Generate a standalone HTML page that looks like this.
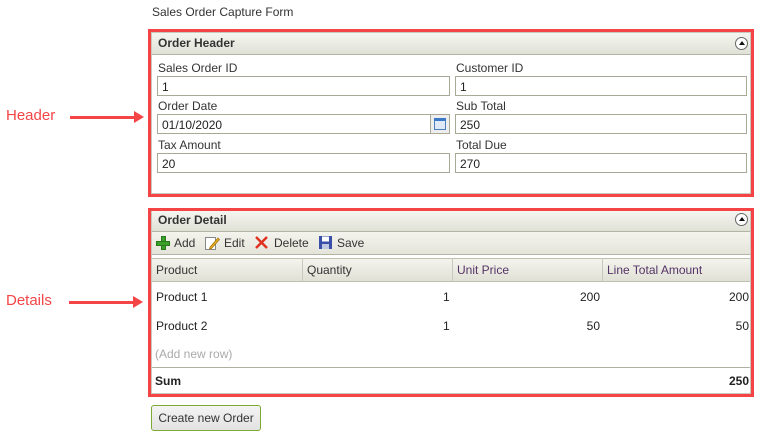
<!DOCTYPE html>
<html><head><style>
*{box-sizing:border-box;margin:0;padding:0}
body{width:758px;height:437px;background:#fff;font-family:"Liberation Sans",sans-serif;font-size:12px;color:#222;position:relative;overflow:hidden}
.a{position:absolute}
.red{position:absolute;border:3px solid #f44446}
.bar{position:absolute;background:linear-gradient(#f6f6f1,#dfe0d6);border-bottom:1px solid #b4b4a4;font-weight:bold;font-size:12px;color:#333;padding-left:6px}
.inp{position:absolute;height:20px;border:1px solid #a9a998;padding:3px 4px;font-size:12px;background:#fff}
.lbl{position:absolute;font-size:12px;color:#333}
.col{position:absolute;top:258px;height:24px;border-right:1px solid #c8c8bc;padding:5px 4px;color:#333}
.tog{position:absolute;width:13px;height:13px;border:1px solid #666;border-radius:50%;background:#fff}
.tog:after{content:"";position:absolute;left:2.5px;top:3px;border-left:3.5px solid transparent;border-right:3.5px solid transparent;border-bottom:4px solid #111}
.arrow{position:absolute;height:3px;background:#f44446}
.arrow:after{content:"";position:absolute;right:-4px;top:-5px;border-top:6.5px solid transparent;border-bottom:6.5px solid transparent;border-left:10px solid #f44446}
</style></head><body>
<div class="a" style="left:152px;top:5px;color:#333">Sales Order Capture Form</div>

<div class="a" style="left:6px;top:107px;color:#f44446;font-size:15px">Header</div>
<div class="arrow" style="left:70px;top:116px;width:70px"></div>
<div class="a" style="left:6px;top:292px;color:#f44446;font-size:15px">Details</div>
<div class="arrow" style="left:69px;top:301px;width:70px"></div>

<div class="red" style="left:148px;top:29px;width:606px;height:168px"></div>
<div class="a" style="left:151px;top:32px;width:600px;height:162px;border:1px solid #c8c8bc"></div>
<div class="bar" style="left:152px;top:33px;width:598px;height:22px;line-height:21px">Order Header</div>
<div class="tog" style="left:735px;top:37px"></div>
<div class="lbl" style="left:158px;top:61px">Sales Order ID</div>
<div class="lbl" style="left:456px;top:61px">Customer ID</div>
<div class="inp" style="left:157px;top:76px;width:293px">1</div>
<div class="inp" style="left:455px;top:76px;width:292px">1</div>
<div class="lbl" style="left:158px;top:99px">Order Date</div>
<div class="lbl" style="left:456px;top:99px">Sub Total</div>
<div class="inp" style="left:157px;top:114px;width:274px">01/10/2020</div>
<div class="a" style="left:430px;top:114px;width:20px;height:20px;border:1px solid #a9a998;background:#eee"><div class="a" style="left:3px;top:3px;width:12px;height:12px;border:1px solid #4a7fc0;border-top:3px solid #3a78c8;background:#dfe9f6"></div></div>
<div class="inp" style="left:455px;top:114px;width:292px">250</div>
<div class="lbl" style="left:158px;top:138px">Tax Amount</div>
<div class="lbl" style="left:456px;top:138px">Total Due</div>
<div class="inp" style="left:157px;top:153px;width:293px">20</div>
<div class="inp" style="left:455px;top:153px;width:292px">270</div>

<div class="red" style="left:148px;top:208px;width:606px;height:189px"></div>
<div class="a" style="left:151px;top:211px;width:600px;height:183px;border:1px solid #c8c8bc"></div>
<div class="bar" style="left:152px;top:211px;width:598px;height:21px;line-height:19px">Order Detail</div>
<div class="tog" style="left:735px;top:213px"></div>
<div class="a" style="left:152px;top:232px;width:598px;height:23px;background:linear-gradient(#f4f4ee,#e4e4da);border-bottom:1px solid #b4b4a4"></div>
<div class="a" style="left:156px;top:236px;width:14px;height:14px">
<div class="a" style="left:5px;top:0;width:5px;height:14px;background:#3aa02a;border:1px solid #2a7a1a"></div>
<div class="a" style="left:0;top:5px;width:14px;height:5px;background:#3aa02a;border:1px solid #2a7a1a"></div></div>
<div class="a" style="left:174px;top:236px;color:#333">Add</div>
<svg class="a" style="left:204px;top:235px" width="16" height="16"><rect x="1.5" y="2.5" width="10" height="12" fill="#fff" stroke="#888"/><path d="M6 12 L14 3 L15.5 4.5 L7.5 13.5 L5.5 14Z" fill="#e8b020" stroke="#a07010" stroke-width=".7"/></svg>
<div class="a" style="left:224px;top:236px;color:#333">Edit</div>
<svg class="a" style="left:254px;top:235px" width="15" height="15"><path d="M2 2 L13 13 M13 2 L2 13" stroke="#e0301e" stroke-width="2.4"/></svg>
<div class="a" style="left:274px;top:236px;color:#333">Delete</div>
<svg class="a" style="left:318px;top:235px" width="15" height="15"><rect x="1" y="1" width="13" height="13" fill="#3a50a8"/><rect x="4" y="1.5" width="7" height="5" fill="#fff"/><rect x="4" y="9" width="7" height="5" fill="#c0c8e0"/></svg>
<div class="a" style="left:337px;top:236px;color:#333">Save</div>

<div class="a" style="left:152px;top:258px;width:598px;height:24px;background:linear-gradient(#f4f4ee,#e0e0d6);border-top:1px solid #c0c0b0;border-bottom:1px solid #c0c0b0"></div>
<div class="col" style="left:152px;width:151px">Product</div>
<div class="col" style="left:303px;width:150px">Quantity</div>
<div class="col" style="left:453px;width:150px;color:#553366">Unit Price</div>
<div class="col" style="left:603px;width:147px;border-right:none;color:#553366">Line Total Amount</div>

<div class="a" style="left:156px;top:290px">Product 1</div>
<div class="a" style="left:443px;top:290px">1</div>
<div class="a" style="left:570px;top:290px;width:30px;text-align:right">200</div>
<div class="a" style="left:718px;top:290px;width:31px;text-align:right">200</div>
<div class="a" style="left:156px;top:319px">Product 2</div>
<div class="a" style="left:443px;top:319px">1</div>
<div class="a" style="left:570px;top:319px;width:30px;text-align:right">50</div>
<div class="a" style="left:718px;top:319px;width:31px;text-align:right">50</div>
<div class="a" style="left:155px;top:347px;color:#aaa">(Add new row)</div>
<div class="a" style="left:152px;top:367px;width:598px;height:1px;background:#b0b0a0"></div>
<div class="a" style="left:155px;top:374px;font-weight:bold">Sum</div>
<div class="a" style="left:700px;top:374px;width:49px;text-align:right;font-weight:bold">250</div>

<div class="a" style="left:151px;top:405px;width:110px;height:26px;border:1px solid #7aaa30;border-radius:3px;background:linear-gradient(#f4f4f4,#e2e2e2);text-align:center;line-height:24px;color:#333">Create new Order</div>
</body></html>
